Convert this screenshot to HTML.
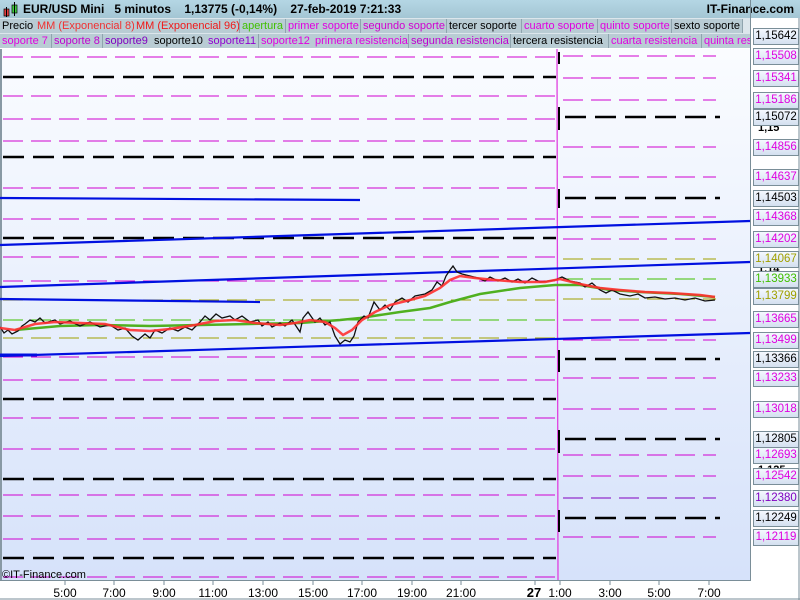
<!DOCTYPE html>
<html><head><meta charset="utf-8"><style>
body{margin:0;width:800px;height:600px;overflow:hidden;font-family:"Liberation Sans",sans-serif;background:#fff}
.hdr{position:absolute;left:0;top:0;width:800px;height:18px;background:linear-gradient(#b4d6e4,#a4c6d4);font-size:12px;font-weight:bold;color:#000}
.leg{position:absolute;height:14px;font-size:11px;line-height:14px;background:#b9ccd4;border-right:1px solid #8fa4ae;padding:0 2px;white-space:nowrap;overflow:hidden}
.lab{position:absolute;left:753px;width:44px;height:15px;border:1px solid #7a8e98;background:linear-gradient(#f4f8ff,#d4e0f0);font-size:11.5px;line-height:15px;text-align:center}
</style></head><body>
<div class="hdr">
<svg style="position:absolute;left:3px;top:2px" width="16" height="16"><rect x="1" y="7" width="5" height="7" fill="#e04040" stroke="#000" stroke-width=".7"/><line x1="3.5" y1="5" x2="3.5" y2="15" stroke="#000"/><rect x="9" y="3" width="5" height="8" fill="#40d040" stroke="#000" stroke-width=".7"/><line x1="11.5" y1="0" x2="11.5" y2="14" stroke="#000"/></svg>
<span style="position:absolute;left:23px;top:2px">EUR/USD Mini &nbsp; 5 minutos &nbsp;&nbsp; 1,13775 (-0,14%) &nbsp;&nbsp; 27-feb-2019 7:21:33</span>
<span style="position:absolute;right:6px;top:2px">IT-Finance.com</span>
</div>
<div style="position:absolute;left:0;top:18px;width:750px;height:30px;background:#dce6ec"></div>
<div class="leg" style="left:0;top:19px;width:31px;color:#000">Precio</div>
<div class="leg" style="left:35px;top:19px;width:95px;color:#f03030">MM (Exponencial 8)</div>
<div class="leg" style="left:134px;top:19px;width:101px;color:#f01818">MM (Exponencial 96)</div>
<div class="leg" style="left:240px;top:19px;width:41px;color:#40c000">apertura</div>
<div class="leg" style="left:286px;top:19px;width:70px;color:#e000e0">primer soporte</div>
<div class="leg" style="left:361px;top:19px;width:81px;color:#d000d0">segundo soporte</div>
<div class="leg" style="left:447px;top:19px;width:70px;color:#000">tercer soporte</div>
<div class="leg" style="left:522px;top:19px;width:71px;color:#e000e0">cuarto soporte</div>
<div class="leg" style="left:598px;top:19px;width:69px;color:#e000e0">quinto soporte</div>
<div class="leg" style="left:672px;top:19px;width:66px;color:#000">sexto soporte</div>
<div class="leg" style="left:0;top:34px;width:47px;color:#e000e0">soporte 7</div>
<div class="leg" style="left:52px;top:34px;width:46px;color:#c000d0">soporte 8</div>
<div class="leg" style="left:103px;top:34px;width:45px;color:#8000c0">soporte9</div>
<div class="leg" style="left:152px;top:34px;width:50px;color:#000">soporte10</div>
<div class="leg" style="left:206px;top:34px;width:48px;color:#9000d0">soporte11</div>
<div class="leg" style="left:259px;top:34px;width:50px;color:#e000e0">soporte12</div>
<div class="leg" style="left:313px;top:34px;width:91px;color:#e000e0">primera resistencia</div>
<div class="leg" style="left:409px;top:34px;width:97px;color:#c000d0">segunda resistencia</div>
<div class="leg" style="left:511px;top:34px;width:93px;color:#000">tercera resistencia</div>
<div class="leg" style="left:609px;top:34px;width:88px;color:#e000e0">cuarta resistencia</div>
<div class="leg" style="left:702px;top:34px;width:44px;color:#e000e0">quinta resistencia</div>

<svg style="position:absolute;left:0;top:0" width="800" height="600">
<defs><linearGradient id="bg" x1="0" y1="0" x2="0" y2="1"><stop offset="0" stop-color="#fafcff"/><stop offset="1" stop-color="#d6e2fa"/></linearGradient></defs>
<rect x="0" y="49" width="750" height="531" fill="url(#bg)"/>
<line x1="1" y1="49" x2="1" y2="580" stroke="#8899a4" stroke-width="2"/>
<line x1="750.5" y1="0" x2="750.5" y2="580" stroke="#7a8e98"/>
<line x1="0" y1="580.5" x2="751" y2="580.5" stroke="#7a8e98"/>
<line x1="0" y1="599" x2="800" y2="599" stroke="#7a8e98"/>
<line x1="799" y1="18" x2="799" y2="600" stroke="#7a8e98"/>
<g stroke-dasharray="20 8" stroke-width="1">
<g stroke="#d000d0">
<line x1="3" x2="556" y1="57" y2="57"/><line x1="3" x2="556" y1="96" y2="96"/><line x1="3" x2="556" y1="119" y2="119"/><line x1="3" x2="556" y1="141" y2="141"/><line x1="3" x2="556" y1="188" y2="188"/><line x1="3" x2="556" y1="219" y2="219"/><line x1="3" x2="556" y1="257" y2="257"/><line x1="3" x2="556" y1="281" y2="281"/><line x1="3" x2="556" y1="357" y2="357"/><line x1="3" x2="556" y1="380" y2="380"/><line x1="3" x2="556" y1="418" y2="418"/><line x1="3" x2="556" y1="449" y2="449"/><line x1="3" x2="556" y1="495" y2="495"/><line x1="3" x2="556" y1="516" y2="516"/><line x1="3" x2="556" y1="539" y2="539"/><line x1="3" x2="556" y1="577" y2="577"/>
<line x1="563" x2="716" y1="56" y2="56"/><line x1="563" x2="716" y1="78" y2="78"/><line x1="563" x2="716" y1="100" y2="100"/><line x1="563" x2="716" y1="147" y2="147"/><line x1="563" x2="716" y1="177" y2="177"/><line x1="563" x2="716" y1="217" y2="217"/><line x1="563" x2="716" y1="239" y2="239"/><line x1="563" x2="716" y1="320" y2="320"/><line x1="563" x2="716" y1="340" y2="340"/><line x1="563" x2="716" y1="378" y2="378"/><line x1="563" x2="716" y1="409" y2="409"/><line x1="563" x2="716" y1="455" y2="455"/><line x1="563" x2="716" y1="476" y2="476"/><line x1="563" x2="716" y1="498" y2="498" stroke="#8000c0"/><line x1="563" x2="716" y1="537" y2="537"/>
</g>
<g stroke="#a0a000"><line x1="3" x2="556" y1="300" y2="300"/><line x1="3" x2="556" y1="338" y2="338"/><line x1="563" x2="716" y1="259" y2="259"/><line x1="563" x2="716" y1="299" y2="299"/></g>
<g stroke="#40c000"><line x1="3" x2="556" y1="320" y2="320"/><line x1="563" x2="716" y1="279" y2="279"/></g>
</g>
<g stroke="#000" stroke-width="2.4" stroke-dasharray="21 9">
<line x1="3" x2="556" y1="77" y2="77"/><line x1="3" x2="556" y1="157" y2="157"/><line x1="3" x2="556" y1="238" y2="238"/><line x1="3" x2="556" y1="399" y2="399"/><line x1="3" x2="556" y1="479" y2="479"/><line x1="3" x2="556" y1="558" y2="558"/>
<line x1="565" x2="720" y1="117" y2="117"/><line x1="565" x2="720" y1="198" y2="198"/><line x1="565" x2="720" y1="359" y2="359"/><line x1="565" x2="720" y1="439" y2="439"/><line x1="565" x2="720" y1="518" y2="518"/>
</g>
<line x1="557" y1="49" x2="558" y2="580" stroke="#e040e0" stroke-width="1.3"/>
<g stroke="#000" stroke-width="2"><line x1="559" y1="52" x2="559" y2="64"/><line x1="559" y1="107" x2="559" y2="130"/><line x1="559" y1="189" x2="559" y2="208"/><line x1="559" y1="350" x2="559" y2="372"/><line x1="559" y1="430" x2="559" y2="453"/><line x1="559" y1="510" x2="559" y2="532"/></g>
<g stroke="#0010e0" stroke-width="2.2" fill="none">
<line x1="0" y1="198" x2="360" y2="200"/><line x1="0" y1="245" x2="750" y2="221"/><line x1="0" y1="287" x2="750" y2="262"/><line x1="0" y1="299" x2="260" y2="302"/><line x1="0" y1="356" x2="750" y2="333"/><line x1="0" y1="355" x2="37" y2="355" stroke-width="3"/>
</g>
<polyline fill="none" stroke="#50b020" stroke-width="2.5" points="15,330 60,326 100,325 150,326 200,325 250,324 300,323 340,320 360,318 400,312 430,308 450,302 480,294 520,288 555,285 580,285 610,290 640,292 680,294 715,297"/>
<polyline fill="none" stroke="#101010" stroke-width="1.3" points="0,327 4,333 8,330 12,334 18,331 22,326 25,324 30,320 35,322 40,318 45,323 55,320 60,324 70,321 80,326 90,322 100,327 110,325 118,330 125,328 132,336 138,340 145,334 150,338 155,330 162,333 170,328 178,331 185,327 192,330 200,322 205,316 210,320 216,314 222,318 230,316 235,320 242,316 250,322 258,320 262,326 268,322 272,327 280,323 285,326 292,320 296,326 300,332 303,318 308,312 315,322 320,318 325,325 330,322 335,336 340,344 345,340 350,342 354,336 358,322 364,316 368,318 374,302 380,310 385,305 390,310 395,302 402,298 408,302 415,296 425,294 432,290 437,282 442,286 446,276 450,270 453,266 457,272 462,274 470,276 478,278 485,281 490,277 498,281 505,278 512,282 518,279 525,283 532,278 540,282 548,281 555,280 562,277 570,281 580,283 585,287 592,283 600,290 606,293 612,290 620,294 630,296 638,294 645,298 655,297 665,299 675,298 685,300 695,298 705,301 715,300"/>
<polyline fill="none" stroke="#ff3030" stroke-width="2.5" stroke-opacity=".9" points="0,328 15,330 35,324 55,322 80,323 105,324 130,330 150,331 170,329 195,325 215,321 235,320 255,323 280,325 295,323 310,320 325,322 335,328 343,335 352,330 362,320 375,312 390,305 410,300 425,296 440,288 450,280 460,276 475,278 495,280 520,282 545,282 560,279 580,284 600,288 620,290 645,292 670,293 700,295 715,297"/>
<g font-family="Liberation Sans" font-size="11" fill="#000">
<text x="2" y="578">©IT-Finance.com</text>
</g>
<g font-family="Liberation Sans" font-size="12" fill="#000" text-anchor="middle" stroke="#7a8e98">
<g stroke-width="1"><line x1="65" y1="581" x2="65" y2="585"/><line x1="114" y1="581" x2="114" y2="585"/><line x1="164" y1="581" x2="164" y2="585"/><line x1="213" y1="581" x2="213" y2="585"/><line x1="263" y1="581" x2="263" y2="585"/><line x1="313" y1="581" x2="313" y2="585"/><line x1="362" y1="581" x2="362" y2="585"/><line x1="412" y1="581" x2="412" y2="585"/><line x1="461" y1="581" x2="461" y2="585"/><line x1="535" y1="581" x2="535" y2="585"/><line x1="560" y1="581" x2="560" y2="585"/><line x1="610" y1="581" x2="610" y2="585"/><line x1="659" y1="581" x2="659" y2="585"/><line x1="709" y1="581" x2="709" y2="585"/></g>
<g stroke="none"><text x="65" y="597">5:00</text><text x="114" y="597">7:00</text><text x="164" y="597">9:00</text><text x="213" y="597">11:00</text><text x="263" y="597">13:00</text><text x="313" y="597">15:00</text><text x="362" y="597">17:00</text><text x="412" y="597">19:00</text><text x="461" y="597">21:00</text><text x="534" y="597" font-weight="bold" font-size="13">27</text><text x="560" y="597">1:00</text><text x="610" y="597">3:00</text><text x="659" y="597">5:00</text><text x="709" y="597">7:00</text></g>
</g>
<text x="758" y="131" font-family="Liberation Sans" font-size="11" font-weight="bold">1,15</text>
<text x="758" y="272" font-family="Liberation Sans" font-size="11" font-weight="bold">1,14</text>
<text x="758" y="473" font-family="Liberation Sans" font-size="11" font-weight="bold">1,125</text>
</svg>
<div class="lab" style="top:28px;color:#000">1,15642</div>
<div class="lab" style="top:48px;color:#e000e0">1,15508</div>
<div class="lab" style="top:70px;color:#e000e0">1,15341</div>
<div class="lab" style="top:92px;color:#e000e0">1,15186</div>
<div class="lab" style="top:109px;color:#000">1,15072</div>
<div class="lab" style="top:139px;color:#e000e0">1,14856</div>
<div class="lab" style="top:169px;color:#e000e0">1,14637</div>
<div class="lab" style="top:190px;color:#000">1,14503</div>
<div class="lab" style="top:209px;color:#e000e0">1,14368</div>
<div class="lab" style="top:231px;color:#e000e0">1,14202</div>
<div class="lab" style="top:251px;color:#a0a000">1,14067</div>
<div class="lab" style="top:271px;color:#40c000">1,13933</div>
<div class="lab" style="top:288px;color:#a0a000">1,13799</div>
<div class="lab" style="top:311px;color:#e000e0">1,13665</div>
<div class="lab" style="top:332px;color:#e000e0">1,13499</div>
<div class="lab" style="top:351px;color:#000">1,13366</div>
<div class="lab" style="top:370px;color:#e000e0">1,13233</div>
<div class="lab" style="top:401px;color:#e000e0">1,13018</div>
<div class="lab" style="top:431px;color:#000">1,12805</div>
<div class="lab" style="top:447px;color:#e000e0">1,12693</div>
<div class="lab" style="top:468px;color:#e000e0">1,12542</div>
<div class="lab" style="top:490px;color:#8000c0">1,12380</div>
<div class="lab" style="top:510px;color:#000">1,12249</div>
<div class="lab" style="top:529px;color:#e000e0">1,12119</div>
</body></html>
